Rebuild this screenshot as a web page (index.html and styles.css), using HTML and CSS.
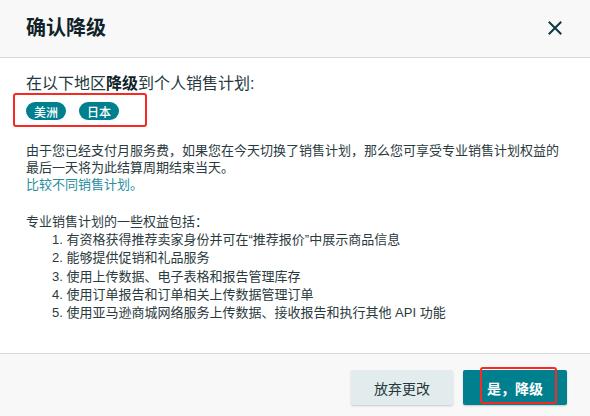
FILE: index.html
```html
<!DOCTYPE html>
<html lang="zh-CN">
<head>
<meta charset="utf-8">
<title>确认降级</title>
<link rel="stylesheet" href="styles.css">
</head>
<body>
<div class="modal">
  <header class="modal-header">
    <h1 class="modal-title">确认降级</h1>
    <button class="close-btn" aria-label="关闭">
      <svg width="14" height="14" viewBox="0 0 14 14"><path d="M1.5 1.5 L12.5 12.5 M12.5 1.5 L1.5 12.5" stroke="#0d3a44" stroke-width="2" fill="none" stroke-linecap="square"/></svg>
    </button>
  </header>
  <main class="modal-body">
    <p class="lead">在以下地区<b>降级</b>到个人销售计划:</p>
    <div class="tags">
      <span class="tag">美洲</span>
      <span class="tag">日本</span>
    </div>
    <p class="desc">由于您已经支付月服务费，如果您在今天切换了销售计划，那么您可享受专业销售计划权益的最后一天将为此结算周期结束当天。<br><a class="link" href="#">比较不同销售计划。</a></p>
    <p class="benefits-title">专业销售计划的一些权益包括：</p>
    <ol class="benefits">
      <li>有资格获得推荐卖家身份并可在“推荐报价”中展示商品信息</li>
      <li>能够提供促销和礼品服务</li>
      <li>使用上传数据、电子表格和报告管理库存</li>
      <li>使用订单报告和订单相关上传数据管理订单</li>
      <li>使用亚马逊商城网络服务上传数据、接收报告和执行其他 API 功能</li>
    </ol>
  </main>
  <footer class="modal-footer">
    <button class="btn btn-secondary">放弃更改</button>
    <button class="btn btn-primary">是，降级</button>
  </footer>
  <div class="mark mark-tags"></div>
  <div class="mark mark-btn"></div>
</div>
</body>
</html>
```

FILE: styles.css
```css
html, body {
  margin: 0;
  padding: 0;
  background: #ffffff;
}

body {
  font-family: "Liberation Sans", "Noto Sans CJK SC", sans-serif;
  color: #0f2f36;
}

.modal {
  position: relative;
  width: 590px;
  height: 416px;
  display: flex;
  flex-direction: column;
  overflow: hidden;
}

.modal-header {
  height: 58px;
  flex: 0 0 auto;
  display: flex;
  align-items: center;
  justify-content: space-between;
  padding: 0 28px 2px 26px;
  box-sizing: border-box;
  background: #f8f8f8;
  border-bottom: 1px solid #d5d9d9;
}

.modal-title {
  margin: 0;
  font-size: 20px;
  line-height: 24px;
  font-weight: 700;
  color: #0f2328;
}

.close-btn {
  border: 0;
  background: transparent;
  padding: 0;
  width: 14px;
  height: 14px;
  display: flex;
}

.modal-body {
  flex: 1 1 auto;
  padding: 15px 20px 0 26px;
}

.lead {
  margin: 0;
  font-size: 16px;
  line-height: 22px;
  color: #24383d;
}

.lead b {
  font-weight: 700;
  color: #0f2328;
}

.tags {
  display: flex;
  gap: 13px;
  margin-top: 7px;
}

.tag {
  display: inline-flex;
  align-items: center;
  justify-content: center;
  height: 18px;
  width: 40px;
  box-sizing: border-box;
  border-radius: 9px;
  background: #00808f;
  color: #ffffff;
  font-size: 12px;
  font-weight: 500;
}

.desc {
  margin: 22px 0 0;
  font-size: 13px;
  line-height: 17px;
  color: #2b3a3e;
}

.link {
  color: #2a8ea0;
  text-decoration: none;
}

.benefits-title {
  margin: 20px 0 0;
  font-size: 13px;
  line-height: 18px;
  color: #2b3a3e;
}

.benefits {
  margin: 0;
  padding-left: 26px;
  list-style-position: inside;
  font-size: 13px;
  line-height: 18.3px;
  color: #2b3a3e;
}

.modal-footer {
  flex: 0 0 63px;
  box-sizing: border-box;
  display: flex;
  justify-content: flex-end;
  align-items: flex-start;
  gap: 10px;
  padding: 16px 23px 0 0;
  background: #f8f8f8;
  border-top: 1px solid #d5d9d9;
}

.btn {
  height: 35px;
  border: 0;
  border-radius: 2px;
  font-family: inherit;
  font-size: 14px;
  box-shadow: 0 1px 2px rgba(0, 0, 0, 0.2);
}

.btn-secondary {
  width: 102px;
  background: #e3ecec;
  color: #24383d;
}

.btn-primary {
  width: 104px;
  background: #00808f;
  color: #ffffff;
  font-weight: 700;
}

.mark {
  position: absolute;
  border: 2px solid #f52a22;
  border-radius: 3px;
  box-sizing: border-box;
}

.mark-tags {
  left: 13px;
  top: 93px;
  width: 134px;
  height: 34px;
}

.mark-btn {
  left: 480px;
  top: 367px;
  width: 77px;
  height: 37px;
}
```
